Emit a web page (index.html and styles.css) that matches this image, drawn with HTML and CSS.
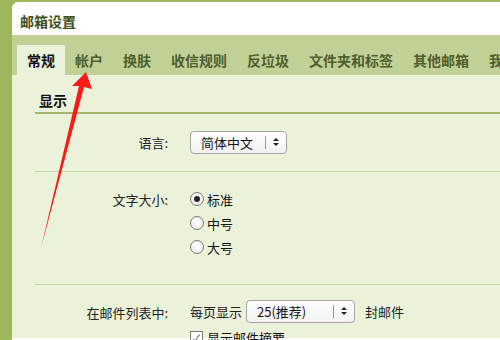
FILE: index.html
```html
<!DOCTYPE html>
<html lang="zh-CN">
  <head>
    <meta charset="UTF-8" />
    <title>邮箱设置</title>
    <link rel="stylesheet" href="styles.css">
  </head>
  <body>
    <div class="panel">
      <div class="title">邮箱设置</div>
      <div class="tabs">
        <div class="tab active">常规</div>
        <div class="tab">帐户</div>
        <div class="tab">换肤</div>
        <div class="tab">收信规则</div>
        <div class="tab">反垃圾</div>
        <div class="tab">文件夹和标签</div>
        <div class="tab">其他邮箱</div>
        <div class="tab">我的</div>
      </div>
      <div class="content">
        <div class="section-title">显示</div>
        <div class="row row-lang">
          <div class="label">语言:</div>
          <div class="field">
            <div class="select select-lang">
              <span class="select-text">简体中文</span>
              <span class="select-arrow"></span>
            </div>
          </div>
        </div>
        <div class="row row-size">
          <div class="label">文字大小:</div>
          <div class="field options">
            <div class="option"><span class="radio checked"></span>标准</div>
            <div class="option"><span class="radio"></span>中号</div>
            <div class="option"><span class="radio"></span>大号</div>
          </div>
        </div>
        <div class="row row-list">
          <div class="label">在邮件列表中:</div>
          <div class="field list-field">
            <div class="inline">
              <span>每页显示</span>
              <div class="select select-count">
                <span class="select-text">25(推荐)</span>
                <span class="select-arrow"></span>
              </div>
              <span class="unit">封邮件</span>
            </div>
            <div class="option"><span class="checkbox">✓</span>显示邮件摘要</div>
          </div>
        </div>
      </div>
    </div>

    <!-- 标注箭头 -->
    <svg class="annotation" width="500" height="340" viewBox="0 0 500 340">
      <polygon points="86,72 92,89 84,87 41,248 79,86 72,86" fill="#ff1a1a" />
    </svg>
  </body>
</html>
```

FILE: styles.css
```css
body {
  margin: 0;
  width: 500px;
  height: 340px;
  overflow: hidden;
  background-color: #9fb75c;
  font-family: "Noto Sans CJK SC", "Noto Sans", sans-serif;
  font-size: 13px;
  color: #222;
  position: relative;
}
.panel {
  margin: 2px 0 0 12px;
  height: 338px;
  background: #fff;
  border-top-left-radius: 6px;
  overflow: hidden;
}
.title {
  height: 33px;
  line-height: 38px;
  padding-left: 8px;
  font-size: 14px;
  font-weight: bold;
  color: #3f4f1c;
}
.tabs {
  display: flex;
  height: 40px;
  padding-left: 5px;
  background: #c1d196;
  white-space: nowrap;
}
.tab {
  margin-top: 10px;
  padding: 0 10px;
  height: 30px;
  line-height: 30px;
  font-size: 14px;
  font-weight: bold;
  color: #4f5e2c;
}
.tab.active {
  background: #eaf2d9;
  color: #111;
}
.content {
  background: #eaf2d9;
  height: 263px;
  padding-left: 23px;
}
.section-title {
  height: 37px;
  line-height: 50px;
  padding-left: 4px;
  font-size: 14px;
  font-weight: bold;
  color: #111;
  border-bottom: 2px solid #a3b86d;
}
.row {
  display: flex;
  border-bottom: 1px solid #c3d39d;
}
.label {
  width: 133px;
  text-align: right;
  padding-right: 22px;
  color: #222;
}
.row-lang {
  height: 57px;
  align-items: center;
}
.row-size {
  height: 112px;
}
.row-size .label {
  margin-top: 18px;
}
.row-size .options {
  margin-top: 18px;
}
.row-list {
  border-bottom: none;
  padding-top: 15px;
}
.row-list .label {
  margin-top: 3px;
}
.select {
  display: flex;
  align-items: center;
  height: 21px;
  border: 1px solid #a5a5a5;
  border-radius: 4px;
  background: linear-gradient(#ffffff, #f1f1f1);
}
.select-lang {
  width: 95px;
}
.select-count {
  width: 107px;
}
.select-text {
  flex: 1;
  padding-left: 10px;
  color: #111;
}
.select-arrow {
  position: relative;
  width: 20px;
  height: 13px;
  border-left: 1px solid #999;
}
.select-arrow::before,
.select-arrow::after {
  content: "";
  position: absolute;
  left: 7px;
  border-left: 3px solid transparent;
  border-right: 3px solid transparent;
}
.select-arrow::before {
  top: 2px;
  border-bottom: 3px solid #222;
}
.select-arrow::after {
  top: 7px;
  border-top: 3px solid #222;
}
.options {
  display: flex;
  flex-direction: column;
  gap: 6px;
}
.option {
  display: flex;
  align-items: center;
  height: 18px;
  color: #111;
}
.radio {
  width: 12px;
  height: 12px;
  margin-right: 3px;
  border: 1px solid #7a7a7a;
  border-radius: 50%;
  background: radial-gradient(circle at 50% 40%, #ffffff, #e4e4e4);
  position: relative;
}
.radio.checked::after {
  content: "";
  position: absolute;
  left: 3px;
  top: 3px;
  width: 6px;
  height: 6px;
  border-radius: 50%;
  background: #222;
}
.list-field {
  display: flex;
  flex-direction: column;
  gap: 5px;
}
.inline {
  display: flex;
  align-items: center;
  gap: 4px;
}
.inline .unit {
  margin-left: 6px;
}
.checkbox {
  width: 11px;
  height: 11px;
  margin-right: 4px;
  border: 1px solid #7a7a7a;
  background: #fff;
  font-size: 10px;
  line-height: 11px;
  text-align: center;
  color: #333;
}
.annotation {
  position: absolute;
  left: 0;
  top: 0;
  pointer-events: none;
}
```
